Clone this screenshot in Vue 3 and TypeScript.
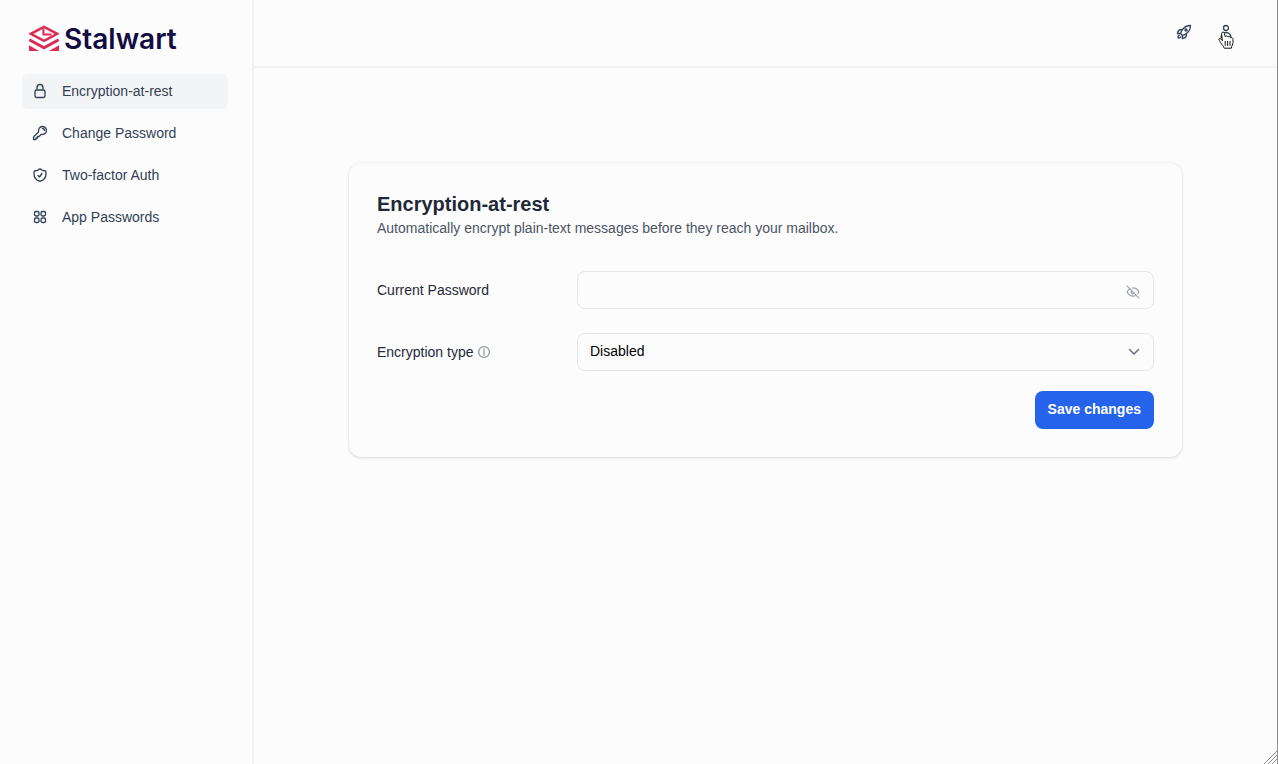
<script setup lang="ts">
import { ref } from 'vue'

interface NavItem {
  label: string
  paths: string[]
}

const navItems: NavItem[] = [
  {
    label: 'Encryption-at-rest',
    paths: [
      'M16.5 10.5V6.75a4.5 4.5 0 1 0-9 0v3.75m-.75 11.25h10.5a2.25 2.25 0 0 0 2.25-2.25v-6.75a2.25 2.25 0 0 0-2.25-2.25H6.75a2.25 2.25 0 0 0-2.25 2.25v6.75a2.25 2.25 0 0 0 2.25 2.25Z',
    ],
  },
  {
    label: 'Change Password',
    paths: [
      'M15.75 5.25a3 3 0 0 1 3 3m3 0a6 6 0 0 1-7.029 5.912c-.563-.097-1.159.026-1.563.43L10.5 17.25H8.25v2.25H6v2.25H2.25v-2.818c0-.597.237-1.17.659-1.591l6.499-6.499c.404-.404.527-1 .43-1.563A6 6 0 1 1 21.75 8.25Z',
    ],
  },
  {
    label: 'Two-factor Auth',
    paths: [
      'M9 12.75 11.25 15 15 9.75m-3-7.036A11.959 11.959 0 0 1 3.598 6 11.99 11.99 0 0 0 3 9.749c0 5.592 3.824 10.29 9 11.623 5.176-1.332 9-6.03 9-11.622 0-1.31-.21-2.571-.598-3.751h-.152c-3.196 0-6.1-1.248-8.25-3.285Z',
    ],
  },
  {
    label: 'App Passwords',
    paths: [
      'M3.75 6A2.25 2.25 0 0 1 6 3.75h2.25A2.25 2.25 0 0 1 10.5 6v2.25a2.25 2.25 0 0 1-2.25 2.25H6a2.25 2.25 0 0 1-2.25-2.25V6Z',
      'M3.75 15.75A2.25 2.25 0 0 1 6 13.5h2.25a2.25 2.25 0 0 1 2.25 2.25V18a2.25 2.25 0 0 1-2.25 2.25H6A2.25 2.25 0 0 1 3.75 18v-2.25Z',
      'M13.5 6a2.25 2.25 0 0 1 2.25-2.25H18A2.25 2.25 0 0 1 20.25 6v2.25A2.25 2.25 0 0 1 18 10.5h-2.25a2.25 2.25 0 0 1-2.25-2.25V6Z',
      'M13.5 15.75a2.25 2.25 0 0 1 2.25-2.25H18a2.25 2.25 0 0 1 2.25 2.25V18A2.25 2.25 0 0 1 18 20.25h-2.25A2.25 2.25 0 0 1 13.5 18v-2.25Z',
    ],
  },
]

const active = ref('Encryption-at-rest')
const password = ref('')
const showPassword = ref(false)
const encryption = ref('Disabled')
</script>

<template>
  <div class="app">
    <aside class="sidebar">
      <a href="#" class="brand">
        <svg class="brand-mark" viewBox="0 0 30 27" aria-hidden="true">
          <path d="M15 1.8 28.2 8.8 15 15.8 1.8 8.8Z" />
          <path d="M14.4 3.4V9.4H22.5" stroke-width="2" />
          <path d="M0.4 14.8 15 22.8 29.6 14.8" stroke-width="2.8" />
          <path d="M0 20.2 10 26H0ZM30 20.2 20 26H30Z" fill="#db2d54" stroke="none" />
        </svg>
        <span class="brand-name">Stalwart</span>
      </a>
      <nav class="nav">
        <a
          v-for="item in navItems"
          :key="item.label"
          href="#"
          class="nav-link"
          :class="{ active: item.label === active }"
          @click.prevent="active = item.label"
        >
          <svg class="nav-icon" viewBox="0 0 24 24" aria-hidden="true">
            <path v-for="d in item.paths" :key="d" :d="d" />
          </svg>
          <span>{{ item.label }}</span>
        </a>
      </nav>
    </aside>

    <div class="content">
      <header class="topbar">
        <button type="button" class="icon-button" aria-label="Quick actions">
          <svg viewBox="0 0 24 24" aria-hidden="true">
            <path d="M15.59 14.37a6 6 0 0 1-5.84 7.38v-4.8m5.84-2.58a14.98 14.98 0 0 0 6.16-12.12A14.98 14.98 0 0 0 9.631 8.41m5.96 5.96a14.926 14.926 0 0 1-5.841 2.58m-.119-8.54a6 6 0 0 0-7.381 5.84h4.8m2.581-5.84a14.927 14.927 0 0 0-2.58 5.84m2.699 2.7c-.103.021-.207.041-.311.06a15.09 15.09 0 0 1-2.448-2.448 14.9 14.9 0 0 1 .06-.312m-2.24 2.39a4.493 4.493 0 0 0-1.757 4.306 4.493 4.493 0 0 0 4.306-1.758M16.5 9a1.5 1.5 0 1 1-3 0 1.5 1.5 0 0 1 3 0Z" />
          </svg>
        </button>
        <button type="button" class="icon-button" aria-label="Account">
          <svg viewBox="0 0 24 24" aria-hidden="true">
            <path d="M15.75 6a3.75 3.75 0 1 1-7.5 0 3.75 3.75 0 0 1 7.5 0ZM4.501 20.118a7.5 7.5 0 0 1 14.998 0A17.933 17.933 0 0 1 12 21.75c-2.676 0-5.216-.584-7.499-1.632Z" />
          </svg>
          <svg class="pointer" viewBox="0 0 16 18" aria-hidden="true">
            <path d="M4.3 9.4 3.6 2.6C3.6 .6 6 .5 6.4 2.4L7.2 5.6C7.8 4.7 9.6 4.8 10 6 10.8 5.2 12.3 5.5 12.6 6.8 13.8 6.3 15 7 15 8.4V11.5C15 13.5 13.6 14.5 13.4 17.2H6.2C5.9 15.4 3.6 13.4 2.6 11.6 2 10.2 .6 8.9 1 8 1.7 7 3.4 8 4.3 9.4Z" />
            <path d="M7.2 10.4V14.4M9.6 10.4V14.4M12 10.4V14.4" />
          </svg>
        </button>
      </header>

      <main class="main">
        <form class="card" @submit.prevent>
          <h1 class="title">Encryption-at-rest</h1>
          <p class="subtitle">Automatically encrypt plain-text messages before they reach your mailbox.</p>

          <div class="fields">
            <label class="label" for="password">Current Password</label>
            <div class="control">
              <input
                id="password"
                v-model="password"
                class="field"
                :type="showPassword ? 'text' : 'password'"
                autocomplete="current-password"
              />
              <button type="button" class="reveal" aria-label="Show password" @click="showPassword = !showPassword">
                <svg viewBox="0 0 24 24" aria-hidden="true">
                  <path d="M9.88 9.88a3 3 0 1 0 4.24 4.24" />
                  <path d="M10.73 5.08A10.43 10.43 0 0 1 12 5c7 0 10 7 10 7a13.16 13.16 0 0 1-1.67 2.68" />
                  <path d="M6.61 6.61A13.526 13.526 0 0 0 2 12s3 7 10 7a9.74 9.74 0 0 0 5.39-1.61" />
                  <path d="M2 2 22 22" />
                </svg>
              </button>
            </div>

            <label class="label" for="encryption">
              <span>Encryption type</span>
              <svg class="info" viewBox="0 0 16 16" aria-hidden="true">
                <circle cx="8" cy="8" r="7.2" />
                <path d="M8 6.8V12M8 4V5.6" />
              </svg>
            </label>
            <div class="control">
              <select id="encryption" v-model="encryption" class="field">
                <option>Disabled</option>
                <option>OpenPGP</option>
                <option>S/MIME</option>
              </select>
              <svg class="chevron" viewBox="0 0 12 12" aria-hidden="true">
                <path d="M1.5 3.5 6 8 10.5 3.5" />
              </svg>
            </div>
          </div>

          <div class="actions">
            <button type="submit" class="save">Save changes</button>
          </div>
        </form>
      </main>
    </div>

    <svg class="grip" viewBox="0 0 14 14" aria-hidden="true">
      <path d="M1 14 14 1M5 14 14 5M9 14 14 9" />
    </svg>
  </div>
</template>

<style>
body {
  margin: 0;
  background: #fcfcfd;
}
</style>

<style scoped>
* {
  box-sizing: border-box;
}

.app {
  position: relative;
  display: flex;
  min-height: 100vh;
  border-right: 1px solid #8f8f8f;
  background: #fcfcfd;
  color: #1f2937;
  font: 14px/20px "Liberation Sans", Arial, sans-serif;
}

svg {
  display: block;
  fill: none;
  stroke: currentColor;
  stroke-linecap: round;
  stroke-linejoin: round;
}

button,
input,
select {
  margin: 0;
  font: inherit;
}

.sidebar {
  flex: 0 0 254px;
  padding: 20px 24px 0 22px;
  border-right: 2px solid #f1f2f4;
}

.brand {
  display: flex;
  align-items: center;
  gap: 5px;
  height: 36px;
  padding-left: 7px;
  color: #120c43;
  text-decoration: none;
}

.brand-mark {
  width: 30px;
  height: 27px;
  stroke: #db2d54;
  stroke-width: 2.5;
  stroke-linecap: butt;
  stroke-linejoin: miter;
}

.brand-name {
  padding-top: 2px;
  font: 600 28px/36px Inter, sans-serif;
}

.nav {
  display: flex;
  flex-direction: column;
  gap: 7px;
  margin-top: 18px;
}

.nav-link {
  display: flex;
  align-items: center;
  gap: 14px;
  height: 35px;
  padding: 0 10px 1px;
  border-radius: 6px;
  color: #334155;
  text-decoration: none;
}

.nav-link.active {
  background: #f3f4f6;
}

.nav-icon {
  width: 16px;
  height: 16px;
  stroke-width: 2;
}

.content {
  flex: 1;
  min-width: 0;
}

.topbar {
  display: flex;
  justify-content: flex-end;
  gap: 6px;
  height: 68px;
  padding: 14px 33px 0 0;
  border-bottom: 2px solid #f1f2f4;
}

.icon-button {
  position: relative;
  display: grid;
  place-items: center;
  width: 36px;
  height: 36px;
  padding: 0;
  border: 0;
  background: none;
  color: #334155;
}

.icon-button svg {
  width: 16px;
  height: 16px;
  stroke-width: 2;
}

.icon-button .pointer {
  position: absolute;
  top: 17px;
  left: 10px;
  width: 16px;
  height: 18px;
  fill: #fff;
  stroke: #111;
  stroke-width: 1;
}

.main {
  padding: 95px 40px 40px;
}

.card {
  max-width: 833px;
  margin: 0 auto;
  padding: 27px 28px 28px;
  border-radius: 12px;
  background: #fcfcfd;
  box-shadow: 0 0 2px rgba(0, 0, 0, 0.08), 0 1px 3px rgba(0, 0, 0, 0.12);
}

.title {
  margin: 0;
  font-size: 20px;
  line-height: 28px;
  font-weight: 700;
}

.subtitle {
  margin: 0;
  color: #4b5563;
}

.fields {
  display: grid;
  grid-template-columns: 200px 1fr;
  row-gap: 24px;
  align-items: center;
  margin-top: 33px;
}

.label {
  display: flex;
  align-items: center;
  gap: 4px;
}

.info {
  width: 12px;
  height: 12px;
  color: #8b929e;
  stroke-width: 1.6;
}

.control {
  position: relative;
}

.field {
  display: block;
  width: 100%;
  height: 38px;
  padding: 0 40px 2px 12px;
  border: 1px solid #e5e7eb;
  border-radius: 8px;
  appearance: none;
  background: transparent;
  color: #000;
}

.reveal {
  position: absolute;
  top: 14px;
  right: 14px;
  padding: 0;
  border: 0;
  background: none;
  color: #9ca3af;
}

.reveal svg {
  width: 14px;
  height: 14px;
  stroke-width: 2;
}

.chevron {
  position: absolute;
  top: 13px;
  right: 14px;
  width: 12px;
  height: 12px;
  color: #6b7280;
  stroke-width: 1.6;
  pointer-events: none;
}

.actions {
  display: flex;
  justify-content: flex-end;
  margin-top: 20px;
}

.save {
  height: 38px;
  padding: 0 13px 2px;
  border: 0;
  border-radius: 8px;
  background: #2563eb;
  color: #fff;
  font-weight: 700;
}

.grip {
  position: absolute;
  right: 0;
  bottom: 0;
  width: 14px;
  height: 14px;
  color: #8f8f8f;
}
</style>
